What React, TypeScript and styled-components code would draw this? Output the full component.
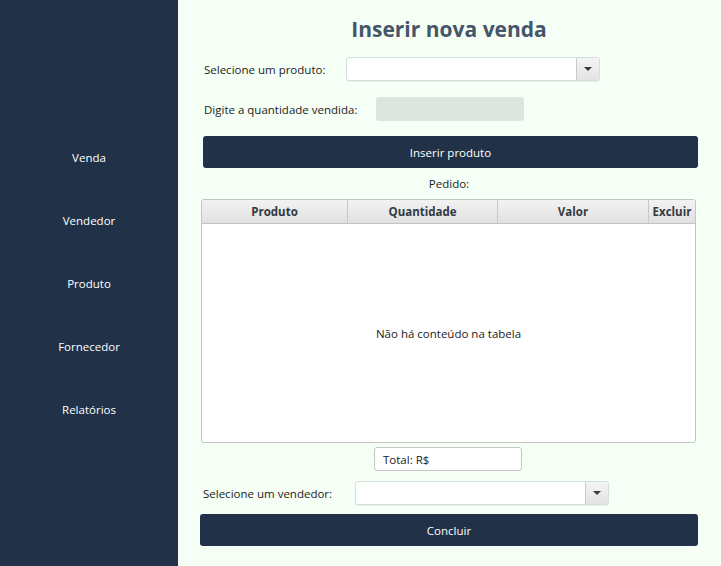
import styled, { createGlobalStyle } from 'styled-components'

const GlobalStyle = createGlobalStyle`
  html, body {
    margin: 0;
    padding: 0;
  }
  body {
    font-family: 'Open Sans', 'Noto Sans', sans-serif;
    font-size: 11px;
    color: #222;
  }
  * {
    box-sizing: border-box;
  }
`

const Shell = styled.div`
  display: flex;
  width: 721px;
  height: 566px;
  overflow: hidden;
`

const Sidebar = styled.nav`
  width: 178px;
  flex-shrink: 0;
  background: #213248;
  display: flex;
  flex-direction: column;
  padding-top: 126px;
`

const NavItem = styled.div`
  height: 63px;
  display: flex;
  align-items: center;
  justify-content: center;
  color: #ffffff;
  font-size: 11.5px;
  cursor: pointer;
`

const Main = styled.main`
  flex: 1;
  background: #f5fff6;
  display: flex;
  flex-direction: column;
  padding: 0 23px 0 22px;
`

const Title = styled.h1`
  margin: 14px 0 0;
  height: 30px;
  line-height: 30px;
  text-align: center;
  font-size: 21px;
  font-weight: 700;
  color: #45556a;
`

const FormRow = styled.div<{ $top: number; $indent: number }>`
  display: flex;
  align-items: center;
  margin-top: ${({ $top }) => $top}px;
  padding-left: ${({ $indent }) => $indent}px;
  height: 24px;
`

const Label = styled.label<{ $width: number }>`
  width: ${({ $width }) => $width}px;
  flex-shrink: 0;
  font-size: 11.5px;
  color: #222;
`

const Combo = styled.div`
  width: 254px;
  height: 24px;
  display: flex;
  background: #ffffff;
  border: 1px solid #d6ded8;
  border-radius: 3px;
  box-shadow: 0 1px 1px rgba(0, 0, 0, 0.06);
  overflow: hidden;
`

const ComboValue = styled.div`
  flex: 1;
`

const ComboArrow = styled.div`
  width: 23px;
  border-left: 1px solid #c9c9c9;
  background: linear-gradient(#f4f4f4, #e3e3e3);
  display: flex;
  align-items: center;
  justify-content: center;

  &::after {
    content: '';
    border-left: 4px solid transparent;
    border-right: 4px solid transparent;
    border-top: 4px solid #3a3a3a;
  }
`

const QtyInput = styled.div`
  width: 148px;
  height: 24px;
  background: #dce5df;
  border-radius: 3px;
`

const PrimaryButton = styled.button<{ $top: number; $left: number }>`
  margin: ${({ $top }) => $top}px 0 0 ${({ $left }) => $left}px;
  height: 32px;
  border: none;
  border-radius: 3px;
  background: #213248;
  color: #ffffff;
  font-family: inherit;
  font-size: 11.5px;
  cursor: pointer;
`

const Caption = styled.div`
  margin-top: 8px;
  height: 16px;
  line-height: 16px;
  text-align: center;
  font-size: 11.5px;
`

const Table = styled.div`
  margin: 7px 2px 0 1px;
  height: 244px;
  background: #ffffff;
  border: 1px solid #c4c4c4;
  border-radius: 3px;
  display: flex;
  flex-direction: column;
  overflow: hidden;
`

const HeaderRow = styled.div`
  display: flex;
  height: 24px;
  background: linear-gradient(#f2f2f2, #e1e1e1);
  border-bottom: 1px solid #c4c4c4;
`

const HeaderCell = styled.div<{ $width: number; $last?: boolean }>`
  width: ${({ $width }) => $width}px;
  flex-shrink: 0;
  display: flex;
  align-items: center;
  justify-content: center;
  font-weight: 700;
  font-size: 11.5px;
  color: #333a44;
  border-right: ${({ $last }) => ($last ? 'none' : '1px solid #c9c9c9')};
`

const EmptyBody = styled.div`
  flex: 1;
  display: flex;
  align-items: center;
  justify-content: center;
  font-size: 11.5px;
  color: #222;
`

const TotalBox = styled.div`
  margin: 4px 0 0 174px;
  width: 148px;
  height: 24px;
  background: #ffffff;
  border: 1px solid #c6c6c6;
  border-radius: 3px;
  display: flex;
  align-items: center;
  padding-left: 8px;
  font-size: 11.5px;
`

const columns = [
  { title: 'Produto', width: 146 },
  { title: 'Quantidade', width: 150 },
  { title: 'Valor', width: 151 },
  { title: 'Excluir', width: 46 },
]

const menu = ['Venda', 'Vendedor', 'Produto', 'Fornecedor', 'Relatórios']

export default function App() {
  return (
    <>
      <GlobalStyle />
      <Shell>
        <Sidebar>
          {menu.map((item) => (
            <NavItem key={item}>{item}</NavItem>
          ))}
        </Sidebar>
        <Main>
          <Title>Inserir nova venda</Title>

          <FormRow $top={13} $indent={4}>
            <Label $width={142}>Selecione um produto:</Label>
            <Combo>
              <ComboValue />
              <ComboArrow />
            </Combo>
          </FormRow>

          <FormRow $top={16} $indent={4}>
            <Label $width={172}>Digite a quantidade vendida:</Label>
            <QtyInput />
          </FormRow>

          <PrimaryButton $top={15} $left={3}>Inserir produto</PrimaryButton>

          <Caption>Pedido:</Caption>

          <Table>
            <HeaderRow>
              {columns.map((col, i) => (
                <HeaderCell key={col.title} $width={col.width} $last={i === columns.length - 1}>
                  {col.title}
                </HeaderCell>
              ))}
            </HeaderRow>
            <EmptyBody>Não há conteúdo na tabela</EmptyBody>
          </Table>

          <TotalBox>Total: R$</TotalBox>

          <FormRow $top={10} $indent={3}>
            <Label $width={152}>Selecione um vendedor:</Label>
            <Combo>
              <ComboValue />
              <ComboArrow />
            </Combo>
          </FormRow>

          <PrimaryButton $top={9} $left={0}>Concluir</PrimaryButton>
        </Main>
      </Shell>
    </>
  )
}
